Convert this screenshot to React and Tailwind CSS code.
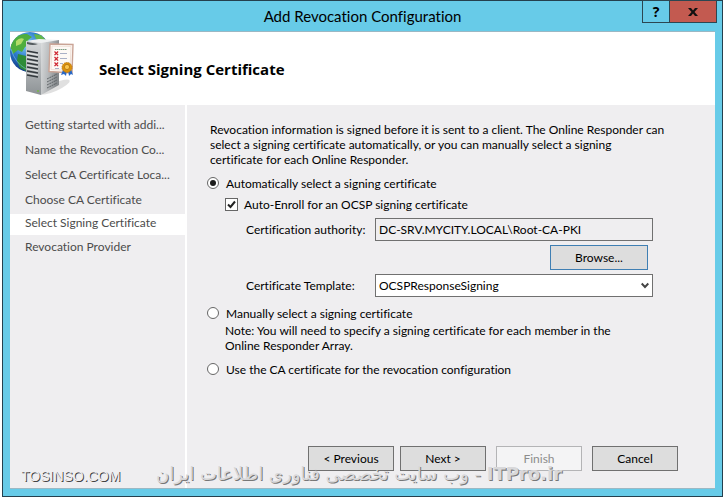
import React from "react";

const steps = [
  "Getting started with addi...",
  "Name the Revocation Co...",
  "Select CA Certificate Loca...",
  "Choose CA Certificate",
  "Select Signing Certificate",
  "Revocation Provider",
];

function ServerIcon() {
  return (
    <svg width="66" height="66" viewBox="0 0 66 66" aria-hidden="true" className="shrink-0">
      <defs>
        <radialGradient id="globe" cx="0.4" cy="0.3" r="0.75">
          <stop offset="0" stopColor="#8fd4f5" />
          <stop offset="0.45" stopColor="#2f7fd0" />
          <stop offset="1" stopColor="#0b2b78" />
        </radialGradient>
        <linearGradient id="side" x1="0" y1="0" x2="1" y2="0.3">
          <stop offset="0" stopColor="#dcdedf" />
          <stop offset="0.55" stopColor="#b4b7b9" />
          <stop offset="1" stopColor="#85898c" />
        </linearGradient>
        <linearGradient id="front" x1="0" y1="0" x2="0" y2="1">
          <stop offset="0" stopColor="#d5d8da" />
          <stop offset="1" stopColor="#8d9295" />
        </linearGradient>
        <clipPath id="disc"><circle cx="20" cy="20" r="20" /></clipPath>
      </defs>
      <ellipse cx="45" cy="55" rx="16" ry="4" fill="#000" opacity="0.12" transform="rotate(-24 45 55)" />
      <circle cx="20" cy="20" r="20" fill="url(#globe)" />
      <g clipPath="url(#disc)">
        <path d="M3 8 Q9 1 17 2 L22 5 L18 8 L20 12 L15 15 L12 20 L8 18 L3 22 L0 14Z" fill="#4fae3d" />
        <path d="M6 9 Q10 5 14 7 L11 12 L6 14Z" fill="#b2dc68" />
        <path d="M24 2 L31 3 L38 10 L30 9 L26 7Z" fill="#64b84b" />
        <path d="M8 22 L16 24 L20 30 L16 39 L10 36 L7 29Z" fill="#2f8c38" />
        <path d="M1 17 Q5 31 16 37" fill="none" stroke="#8ad5ff" strokeWidth="1" opacity="0.5" />
      </g>
      <path d="M16 9 L29 7 L49 8 L31 12Z" fill="#eef0f1" />
      <path d="M16 9 L31 11 L31 63 L16 59Z" fill="url(#front)" />
      <path d="M31 11 L49 8 L49 53 L31 63Z" fill="url(#side)" />
      <path d="M17 10 L28 12 Q23 14 17 12Z" fill="#535a5e" />
      <g stroke="#33393d" strokeWidth="1.5">
        <path d="M17 19L28 21M17 23L28 25M17 27L28 29M17 31L28 33M17 35L28 37M17 39L28 41M17 43L28 45" />
      </g>
      <g stroke="#f2f3f4" strokeWidth="0.7">
        <path d="M17 21L28 23M17 25L28 27M17 29L28 31M17 33L28 35M17 37L28 39M17 41L28 43" />
      </g>
      <g stroke="#565b5f" strokeWidth="0.9">
        <path d="M37 50L47 45M37 53L47 48M37 47L47 42M37 56L47 51" strokeDasharray="2 0.6" />
      </g>
      <circle cx="28" cy="59" r="1" fill="#75b845" />
      <path d="M40 12 L63 12.500 L62 41 L39 39.500Z" fill="#fdf9f5" stroke="#caa496" strokeWidth="1.4" />
      <path d="M42 14 L61 14.500 L60 38.500 L41 37.500Z" fill="none" stroke="#eddbd0" strokeWidth="0.8" />
      <path d="M45 17.500H57" stroke="#7f9f86" strokeWidth="1" strokeDasharray="1.500 0.500" />
      <g stroke="#cf2732" strokeWidth="1.300">
        <path d="M44.500 19.500l3.600 3.600m0-3.600l-3.600 3.600M44.500 25l3.600 3.600m0-3.600l-3.600 3.600M44.500 30.500l3.600 3.600m0-3.600l-3.600 3.600" />
      </g>
      <path d="M50 21.500H57M50 26.500H57M50 31.500H53M45 36.500H49" stroke="#a9b0c6" strokeWidth="1" />
      <path d="M53 38 L51 43 L54 42 L56 44 L57 38Z M58 38 L59 44 L61 42 L63 43 L61 37Z" fill="#2868c7" />
      <circle cx="57" cy="35.500" r="5" fill="#dc920b" stroke="#b97109" strokeWidth="0.8" strokeDasharray="1.500 0.700" />
      <circle cx="57" cy="35" r="2.600" fill="#fbc54c" stroke="#a8690a" strokeWidth="0.7" />
    </svg>
  );
}

function Radio({ id, label, defaultChecked }) {
  return (
    <div className="flex h-4 items-center gap-[7px]">
      <input
        id={id}
        type="radio"
        name="mode"
        defaultChecked={defaultChecked}
        className="grid size-3 shrink-0 appearance-none place-items-center rounded-full border border-[#666] bg-white before:size-1.5 before:rounded-full checked:before:bg-[#1c1c1c]"
      />
      <label htmlFor={id}>{label}</label>
    </div>
  );
}

function WizardButton({ children, disabled }) {
  return (
    <button
      type="button"
      disabled={disabled}
      className="h-[25px] w-[86px] border border-[#707070] bg-[#dddddd] disabled:border-[#b4b4b6] disabled:bg-[#f4f4f5] disabled:text-[#8c8c8c]"
    >
      {children}
    </button>
  );
}

export default function App() {
  return (
    <div className="h-screen bg-white pl-0.5 font-['Lato','Open_Sans',sans-serif] text-xs leading-[15px] text-black [font-variant-ligatures:no-common-ligatures]">
      <div className="relative flex h-full flex-col border border-[#24404e] bg-[#67cbe8] px-[7px] pb-[7px]">
        <header className="relative flex h-[30px] shrink-0 items-center justify-center">
          <h1 className="text-[15px] leading-5">Add Revocation Configuration</h1>
          <div className="absolute -top-px -right-0.5 flex h-[23px] border border-[#2c4651]">
            <button type="button" aria-label="Help" className="w-[27px] border-r border-[#2c4651] font-['Open_Sans',sans-serif] text-sm leading-5 font-bold">?</button>
            <button type="button" aria-label="Close" className="grid w-[46px] place-items-center bg-[#c35a50]">
              <svg width="10" height="8" viewBox="0 0 10 8" aria-hidden="true">
                <path d="M0 0H3L5 2.500L7 0H10L6.500 4L10 8H7L5 5.500L3 8H0L3.500 4Z" fill="#111" />
              </svg>
            </button>
          </div>
        </header>

        <div className="flex min-h-0 flex-1 flex-col border-t border-b border-[#9bb8c4] bg-white">
          <div className="flex h-[73px] shrink-0 gap-[23px]">
            <ServerIcon />
            <h2 className="pt-[27px] font-['Open_Sans',sans-serif] text-[15px] leading-5 font-bold">Select Signing Certificate</h2>
          </div>

          <div className="flex min-h-0 flex-1 gap-0.5">
            <nav className="w-[175px] shrink-0 bg-[#efeef0] pt-[9px] text-[#4c4c4c]">
              <ol>
                {steps.map((step, i) => (
                  <li
                    key={step}
                    aria-current={i === 4 ? "step" : undefined}
                    className="h-[25px] truncate pt-[3px] pl-[15px] aria-[current=step]:mb-px aria-[current=step]:h-[21px] aria-[current=step]:bg-white aria-[current=step]:pt-px"
                  >
                    {step}
                  </li>
                ))}
              </ol>
            </nav>

            <main className="flex min-w-0 flex-1 flex-col bg-[#efeef0] pt-[17px] pr-[37px] pb-[17px] pl-5">
              <p className="pl-[3px]">
                Revocation information is signed before it is sent to a client. The Online Responder can
                <br />
                select a signing certificate automatically, or you can manually select a signing
                <br />
                certificate for each Online Responder.
              </p>
              <div className="pt-2">
                <Radio id="auto" label="Automatically select a signing certificate" defaultChecked />
              </div>
              <div className="mt-[5px] flex h-4 items-center gap-1.5 pl-[18px]">
                <span className="relative size-[13px] shrink-0">
                  <input id="enroll" type="checkbox" defaultChecked className="peer block size-[13px] appearance-none border border-[#666] bg-white" />
                  <svg viewBox="0 0 13 13" aria-hidden="true" className="pointer-events-none absolute inset-0 hidden peer-checked:block">
                    <path d="M3 6.500L5.500 9L10 3.500" fill="none" stroke="#222" strokeWidth="2" />
                  </svg>
                </span>
                <label htmlFor="enroll">Auto-Enroll for an OCSP signing certificate</label>
              </div>
              <div className="mt-[6px] flex items-center pl-[39px]">
                <label htmlFor="authority" className="w-[129px] shrink-0">Certification authority:</label>
                <input id="authority" readOnly value="DC-SRV.MYCITY.LOCAL\Root-CA-PKI" className="h-[23px] w-[278px] border border-[#707070] bg-[#efeef0] px-[3px]" />
              </div>
              <div className="mt-1 flex w-[441px] justify-end">
                <button type="button" className="h-[25px] w-[98px] border border-[#3f7fb3] bg-[#dddddd]">Browse...</button>
              </div>
              <div className="mt-1 flex items-center pl-[39px]">
                <label htmlFor="template" className="w-[129px] shrink-0">Certificate Template:</label>
                <div className="relative w-[278px]">
                  <select id="template" className="block h-[23px] w-full appearance-none border border-[#707070] bg-white px-[3px]">
                    <option>OCSPResponseSigning</option>
                  </select>
                  <svg width="8" height="7" viewBox="0 0 8 7" aria-hidden="true" className="pointer-events-none absolute top-2 right-1">
                    <path d="M0.700 1.500L4 5L7.300 1.500" fill="none" stroke="#444" strokeWidth="1.900" />
                  </svg>
                </div>
              </div>
              <div className="pt-2">
                <Radio id="manual" label="Manually select a signing certificate" />
              </div>
              <p className="pt-0.5 pl-[18px]">
                Note: You will need to specify a signing certificate for each member in the
                <br />
                Online Responder Array.
              </p>
              <div className="pt-2">
                <Radio id="ca" label="Use the CA certificate for the revocation configuration" />
              </div>
              <div className="mt-auto flex justify-end gap-2.5">
                <div className="flex gap-1.5">
                  <WizardButton>&lt; Previous</WizardButton>
                  <WizardButton>Next &gt;</WizardButton>
                </div>
                <WizardButton disabled>Finish</WizardButton>
                <WizardButton>Cancel</WizardButton>
              </div>
            </main>
          </div>
        </div>

        <span className="pointer-events-none absolute bottom-2.5 left-[18px] font-['Liberation_Sans',sans-serif] text-sm leading-5 text-[#efeef0] [text-shadow:1px_1px_0_#444]">
          TOSINSO.COM
        </span>
        <span dir="rtl" className="pointer-events-none absolute right-40 bottom-2.5 font-['DejaVu_Sans',sans-serif] text-lg leading-6 whitespace-nowrap text-[#d8d8da] [text-shadow:1px_1px_0_#777]">
          <bdi className="font-bold">ITPro.ir</bdi> - وب سایت تخصصی فناوری اطلاعات ایران
        </span>
      </div>
    </div>
  );
}
